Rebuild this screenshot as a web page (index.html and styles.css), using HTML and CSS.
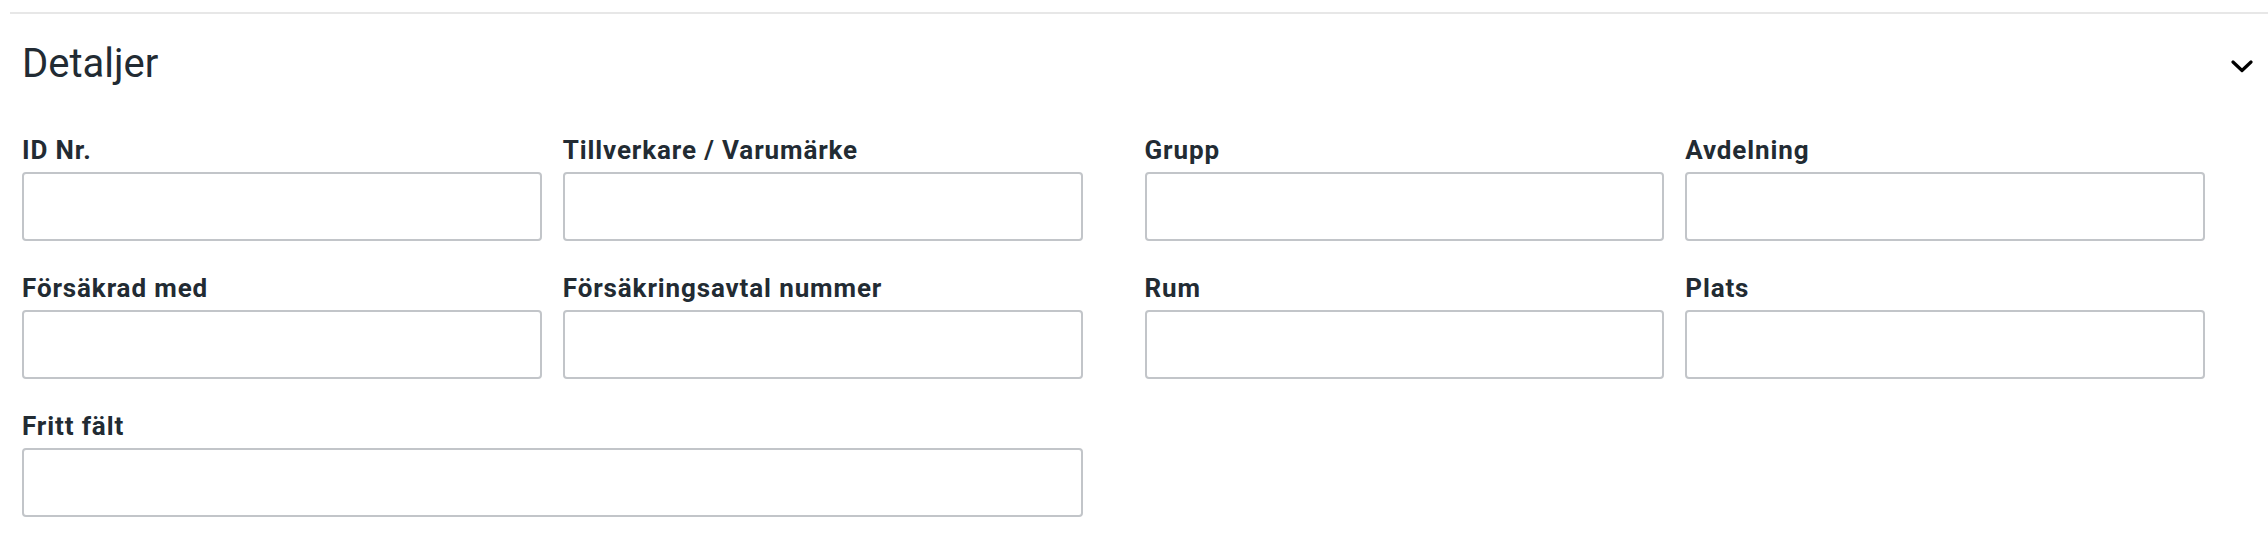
FILE: index.html
```html
<!DOCTYPE html>
<html lang="sv">
<head>
<meta charset="utf-8">
<title>Detaljer</title>
<link rel="stylesheet" href="styles.css">
</head>
<body>
<section class="panel">
  <header class="panel-header">
    <h2 class="panel-title">Detaljer</h2>
    <button class="toggle" type="button" aria-label="Fäll ihop">
      <svg width="22" height="13" viewBox="0 0 22 13" aria-hidden="true"><polyline points="2,2 11,10.5 20,2" fill="none" stroke="#000" stroke-width="3.2" stroke-linecap="round" stroke-linejoin="round"/></svg>
    </button>
  </header>
  <div class="fields">
    <div class="half">
      <div class="field"><label class="label">ID Nr.</label><input class="input" type="text"></div>
      <div class="field"><label class="label">Tillverkare / Varumärke</label><input class="input" type="text"></div>
      <div class="field"><label class="label">Försäkrad med</label><input class="input" type="text"></div>
      <div class="field"><label class="label">Försäkringsavtal nummer</label><input class="input" type="text"></div>
      <div class="field wide"><label class="label">Fritt fält</label><input class="input" type="text"></div>
    </div>
    <div class="half">
      <div class="field"><label class="label">Grupp</label><input class="input" type="text"></div>
      <div class="field"><label class="label">Avdelning</label><input class="input" type="text"></div>
      <div class="field"><label class="label">Rum</label><input class="input" type="text"></div>
      <div class="field"><label class="label">Plats</label><input class="input" type="text"></div>
    </div>
  </div>
</section>
</body>
</html>
```
FILE: styles.css
```css
html, body {
  margin: 0;
  padding: 0;
  background: #ffffff;
}
body {
  font-family: Roboto, "Liberation Sans", sans-serif;
  color: #222b33;
}
.panel {
  margin-left: 10px;
  border-top: 2px solid #e7e7e7;
  margin-top: 12px;
  padding: 26px 15px 0 12px;
}
.panel-header {
  display: flex;
  justify-content: space-between;
  align-items: center;
}
.panel-title {
  margin: 0;
  font-size: 40px;
  line-height: 48px;
  font-weight: 400;
  color: #222b33;
}
.toggle {
  border: 0;
  background: none;
  padding: 0;
  margin-top: 4px;
  display: flex;
}
.fields {
  display: flex;
  gap: 62px;
  padding-right: 48px;
  margin-top: 47px;
}
.half {
  flex: 1 1 0;
  display: grid;
  grid-template-columns: 1fr 1fr;
  column-gap: 21px;
  row-gap: 32px;
  align-content: start;
}
.field {
  display: flex;
  flex-direction: column;
}
.wide {
  grid-column: span 2;
}
.label {
  display: block;
  font-size: 26px;
  line-height: 30px;
  font-weight: 700;
  color: #222b33;
  margin-bottom: 7px;
  letter-spacing: 0.88px;
}
.input {
  box-sizing: border-box;
  height: 69px;
  width: 100%;
  border: 2px solid #c2c5c9;
  border-radius: 4px;
  background: #fff;
  margin: 0;
  padding: 0 12px;
}
```
